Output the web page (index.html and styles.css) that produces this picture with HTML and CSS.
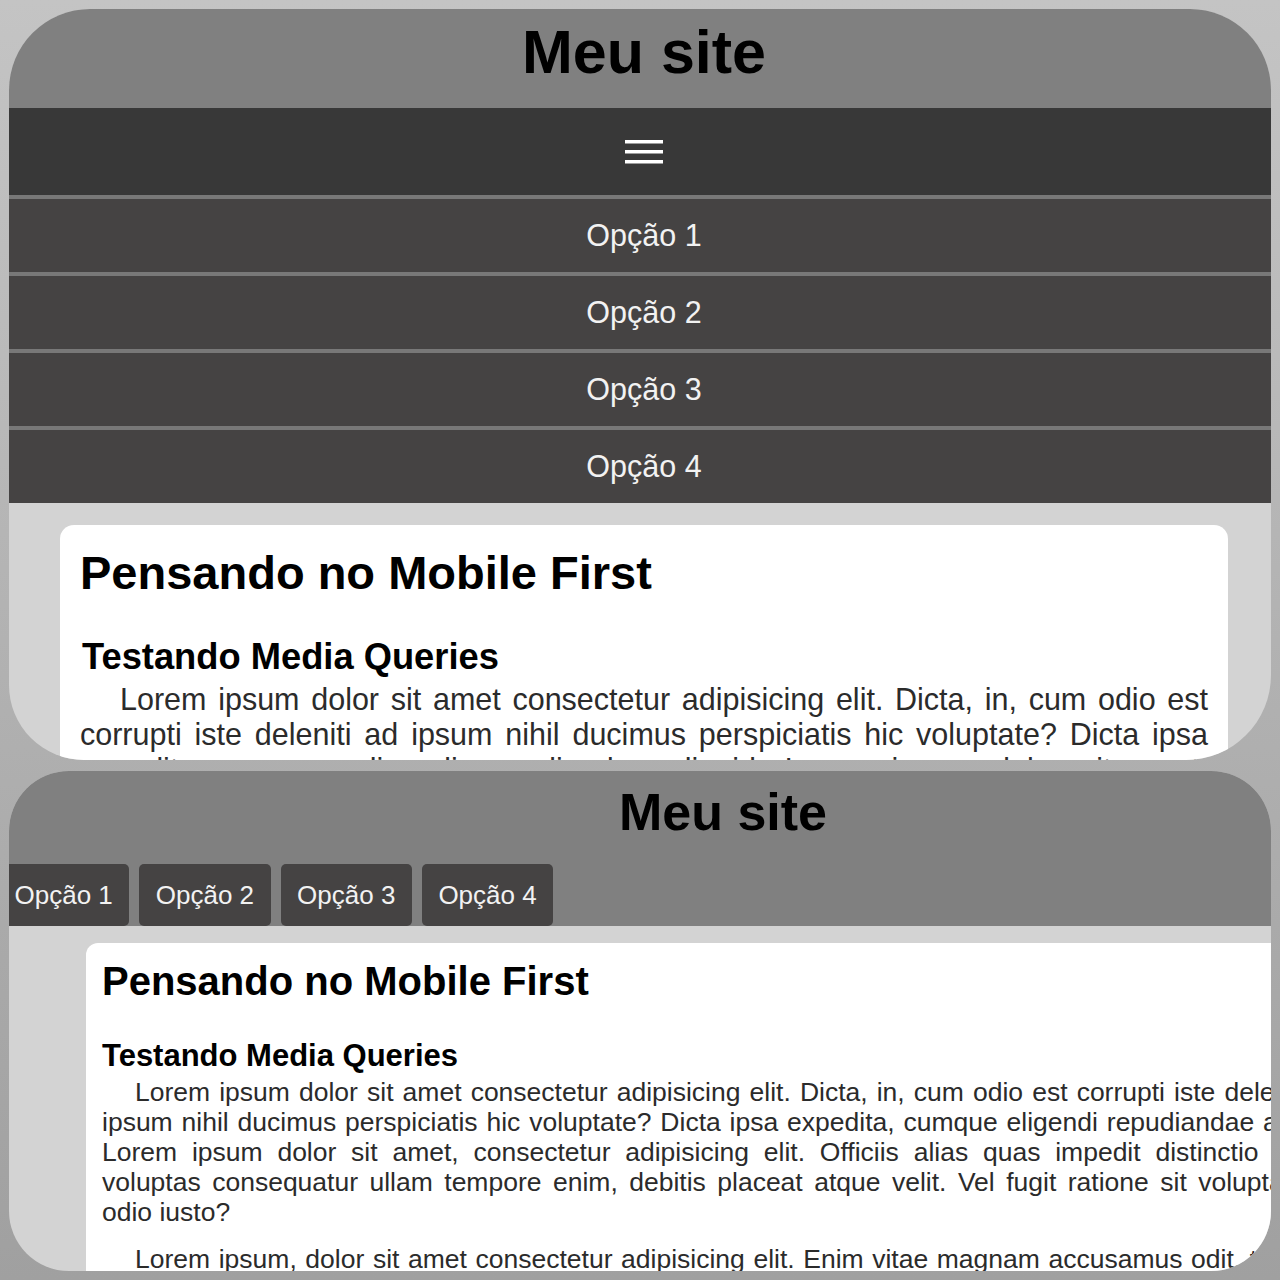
FILE: index.html
```html
<!DOCTYPE html>
<html>
<head>
    <title>Meu site</title>
    <link rel="stylesheet" href="styles.css">
</head>
<body>
    <div class="shot shot-mobile">
        <div class="page">
            <header class="site-header">
                <h1>Meu site</h1>
            </header>
            <nav class="menu">
                <div class="menu-toggle">
                    <svg width="38" height="24" viewBox="0 0 38 24">
                        <rect x="0" y="0" width="38" height="3.5" fill="#fff"/>
                        <rect x="0" y="10" width="38" height="3.5" fill="#fff"/>
                        <rect x="0" y="20" width="38" height="3.5" fill="#fff"/>
                    </svg>
                </div>
                <ul class="menu-list">
                    <li>Opção 1</li>
                    <li>Opção 2</li>
                    <li>Opção 3</li>
                    <li>Opção 4</li>
                </ul>
            </nav>
            <main class="content">
                <article class="card">
                    <h2>Pensando no Mobile First</h2>
                    <h3>Testando Media Queries</h3>
                    <p>Lorem ipsum dolor sit amet consectetur adipisicing elit. Dicta, in, cum odio est corrupti iste deleniti ad ipsum nihil ducimus perspiciatis hic voluptate? Dicta ipsa expedita, cumque eligendi repudiandae aliquid. Lorem ipsum dolor sit amet, consectetur adipisicing elit. Officiis alias quas impedit distinctio eaque voluptas consequatur ullam tempore enim, debitis placeat atque velit. Vel fugit ratione sit voluptatibus, odio iusto?</p>
                </article>
            </main>
        </div>
    </div>

    <div class="shot shot-desktop">
        <div class="page">
            <header class="site-header">
                <h1>Meu site</h1>
                <nav class="tabs">
                    <a href="#">Opção 1</a>
                    <a href="#">Opção 2</a>
                    <a href="#">Opção 3</a>
                    <a href="#">Opção 4</a>
                </nav>
            </header>
            <main class="content">
                <article class="card">
                    <h2>Pensando no Mobile First</h2>
                    <h3>Testando Media Queries</h3>
                    <p>Lorem ipsum dolor sit amet consectetur adipisicing elit. Dicta, in, cum odio est corrupti iste deleniti ad ipsum nihil ducimus perspiciatis hic voluptate? Dicta ipsa expedita, cumque eligendi repudiandae aliquid. Lorem ipsum dolor sit amet, consectetur adipisicing elit. Officiis alias quas impedit distinctio eaque voluptas consequatur ullam tempore enim, debitis placeat atque velit. Vel fugit ratione sit voluptatibus, odio iusto?</p>
                    <p>Lorem ipsum, dolor sit amet consectetur adipisicing elit. Enim vitae magnam accusamus odit, tempora quaerat nobis sequi eveniet.</p>
                </article>
            </main>
        </div>
    </div>
</body>
</html>
```

FILE: styles.css
```css
* {
    box-sizing: border-box;
}

body {
    margin: 0;
    padding: 9px 0 0 9px;
    height: 1280px;
    overflow: hidden;
    background: linear-gradient(to bottom, #c4c4c4, #a0a0a0);
    font-family: "Liberation Sans", Arial, sans-serif;
}

h1, h2, h3, p, ul {
    margin: 0;
    padding: 0;
}

.shot {
    width: 1262px;
    overflow: hidden;
    background-color: #d3d3d3;
}

.site-header {
    background-color: #808080;
    color: #000;
}

.card {
    background-color: #fff;
}

.card h2,
.card h3 {
    color: #000;
}

.card p {
    color: #2b2b2b;
    text-align: justify;
}

/* mobile screenshot */
.shot-mobile {
    height: 751px;
    border-radius: 81px 81px 85px 75px;
}

.shot-mobile .page {
    width: 1270px;
}

.shot-mobile .site-header {
    height: 99px;
    padding-bottom: 12px;
    text-align: center;
}

.shot-mobile h1 {
    font-size: 61px;
    line-height: 87px;
}

.menu-toggle {
    height: 87px;
    background-color: #383838;
    display: flex;
    align-items: center;
    justify-content: center;
}

.menu-toggle svg {
    display: block;
}

.menu-list {
    list-style: none;
}

.menu-list li {
    height: 77px;
    border-top: 4px solid #787878;
    background-color: #454343;
    color: #f2f2f2;
    font-size: 30.5px;
    line-height: 73px;
    text-align: center;
}

.shot-mobile .card {
    margin: 22px 51px 0;
    padding: 20px;
    border-radius: 14px;
}

.shot-mobile h2 {
    font-size: 47px;
}

.shot-mobile h3 {
    font-size: 36.3px;
    margin-top: 36px;
    margin-bottom: 4px;
    padding-left: 2px;
}

.shot-mobile p {
    font-size: 30.5px;
    line-height: 35px;
    text-indent: 40px;
}

/* desktop screenshot */
.shot-desktop {
    height: 500px;
    margin-top: 11px;
    border-radius: 60px;
}

.shot-desktop .site-header {
    height: 155px;
    padding-top: 11px;
    display: flex;
    flex-direction: column;
}

.shot-desktop h1 {
    font-size: 52px;
    padding-left: 166px;
    text-align: center;
}

.tabs {
    margin-top: auto;
    margin-left: -11px;
    display: flex;
    gap: 10px;
}

.tabs a {
    height: 62px;
    padding: 0 16.5px;
    background-color: #454343;
    color: #f2f2f2;
    font-size: 26px;
    line-height: 62px;
    text-decoration: none;
    border-radius: 5px;
}

.shot-desktop .content {
    padding-top: 17px;
}

.shot-desktop .card {
    margin-left: 77px;
    width: 1277px;
    padding: 16px 16px;
    border-radius: 12px;
}

.shot-desktop h2 {
    font-size: 40px;
}

.shot-desktop h3 {
    font-size: 31px;
    margin-top: 34px;
    margin-bottom: 3px;
}

.shot-desktop p {
    font-size: 26.5px;
    line-height: 30px;
    text-indent: 33px;
}

.shot-desktop p + p {
    margin-top: 17px;
}
```
